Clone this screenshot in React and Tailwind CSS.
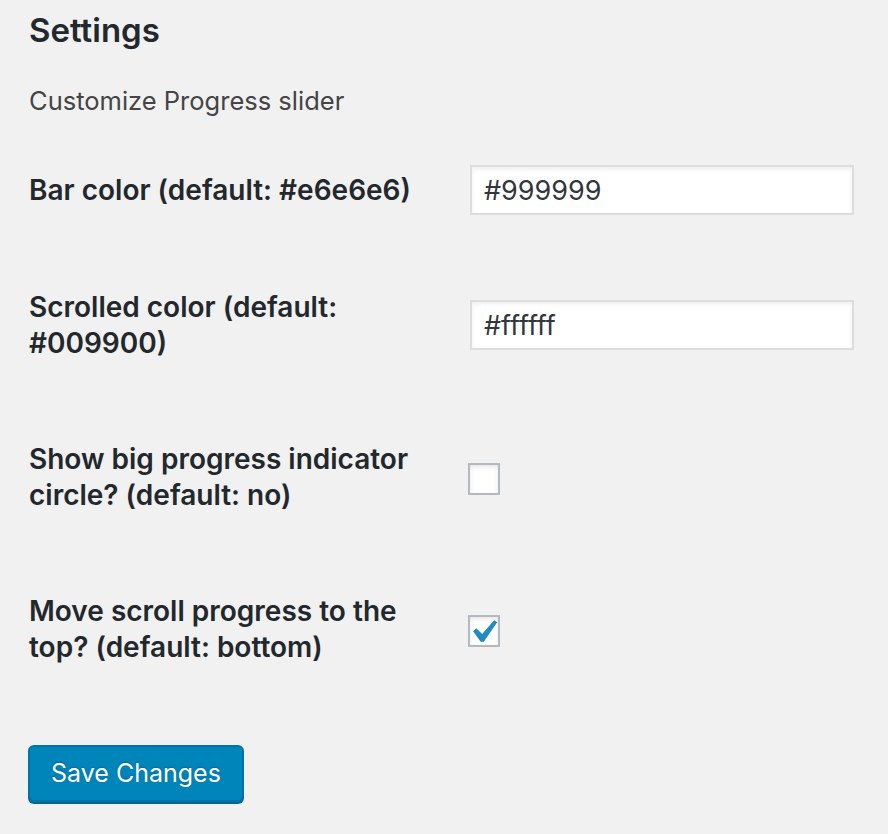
import React from 'react';

const font = { fontFamily: 'Inter, "Liberation Sans", sans-serif' };

function Row({ label, first, children }) {
    return (
        <div className={`flex items-center ${first ? 'pt-[42px] pb-[34px]' : 'py-[40px]'}`}>
            <div className="w-[441px] shrink-0 pr-[24px] text-[28px] leading-[36px] font-semibold text-[#23282d]">
                {label}
            </div>
            <div className="flex-1 flex items-center">{children}</div>
        </div>
    );
}

function TextInput({ value }) {
    return (
        <input
            type="text"
            defaultValue={value}
            className="w-[384px] h-[50px] bg-white border-2 border-[#dddddd] px-[12px] text-[27px] text-[#32373c] shadow-[inset_0_2px_4px_rgba(0,0,0,0.07)] outline-none"
        />
    );
}

function Checkbox({ checked }) {
    return (
        <div className="w-[32px] h-[32px] -ml-[2px] mt-[4px] bg-white border-2 border-[#b4b9be] shadow-[inset_0_2px_4px_rgba(0,0,0,0.1)] flex items-center justify-center overflow-visible">
            {checked && (
                <svg width="26" height="26" viewBox="5.3 4.4 11.2 11.2" className="ml-[2px] mt-[2px] overflow-visible">
                    <path d="M14.83 4.89l1.34.94-5.81 8.38H9.02L5.78 9.67l1.34-1.25 2.57 2.4z" fill="#1e8cbe" />
                </svg>
            )}
        </div>
    );
}

export default function App() {
    return (
        <div className="min-h-[834px] w-[888px] bg-[#f1f1f1] px-[29px]" style={font}>
            <h2 className="pt-[8px] text-[33px] leading-[44px] font-semibold text-[#23282d]">Settings</h2>
            <p className="mt-[31px] text-[25.5px] leading-[36px] text-[#444444]">Customize Progress slider</p>

            <div className="mt-[4px] flex flex-col">
                <Row first label="Bar color (default: #e6e6e6)">
                    <TextInput value="#999999" />
                </Row>
                <Row label="Scrolled color (default: #009900)">
                    <TextInput value="#ffffff" />
                </Row>
                <Row label="Show big progress indicator circle? (default: no)">
                    <Checkbox checked={false} />
                </Row>
                <Row label="Move scroll progress to the top? (default: bottom)">
                    <Checkbox checked={true} />
                </Row>
            </div>

            <button className="-ml-[1px] mt-[40px] h-[57px] px-[21px] rounded-[6px] bg-[#0085ba] border-2 border-[#0073aa] shadow-[0_2px_0_#006799] text-white text-[25px] [text-shadow:0_-1px_2px_#006799]">
                Save Changes
            </button>
        </div>
    );
}
